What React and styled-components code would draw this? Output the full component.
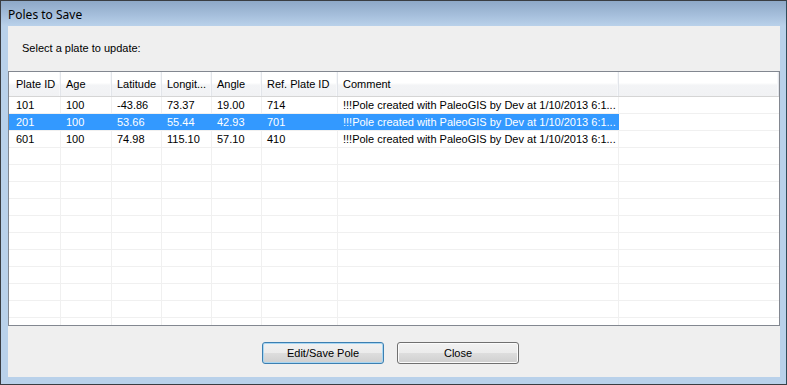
import React from "react"
import styled, { createGlobalStyle } from "styled-components"

const GlobalStyle = createGlobalStyle`
  html, body {
    margin: 0;
    padding: 0;
    background: #ffffff;
  }
  body {
    font-family: "Liberation Sans", Arial, sans-serif;
  }
`

const Window = styled.div`
  width: 787px;
  height: 385px;
  box-sizing: border-box;
  border: 1px solid #3a3d42;
  border-right-color: #2f4c5a;
  display: flex;
  flex-direction: column;
  background: #b9d1ea;
  overflow: hidden;
`

const TitleBar = styled.div`
  height: 25px;
  flex: none;
  display: flex;
  align-items: center;
  padding: 1px 0 0 7px;
  box-sizing: border-box;
  background: linear-gradient(to bottom, #8ea8c7 0%, #a5bedb 55%, #b9d1ea 100%);
  font-family: "Noto Sans", "Open Sans", sans-serif;
  font-size: 12px;
  color: #000000;
`

const Client = styled.div`
  flex: 1;
  margin: 0 6px 7px 7px;
  background: #efefef;
  display: flex;
  flex-direction: column;
`

const Prompt = styled.div`
  height: 45px;
  flex: none;
  box-sizing: border-box;
  padding: 16px 0 0 14px;
  font-size: 11px;
  color: #000000;
`

const ListView = styled.div`
  height: 255px;
  flex: none;
  box-sizing: border-box;
  border: 1px solid #828790;
  background: #ffffff;
  display: flex;
  flex-direction: column;
  overflow: hidden;
`

const cols = "52px 51px 50px 50px 50px 76px 281px 1fr"

const HeaderRow = styled.div`
  display: grid;
  grid-template-columns: ${cols};
  height: 25px;
  flex: none;
  box-sizing: border-box;
  border-bottom: 1px solid #d5d5d5;
  background: linear-gradient(to bottom, #ffffff 0%, #ffffff 45%, #f3f4f6 55%, #f1f2f4 100%);
`

const HeaderCell = styled.div`
  display: flex;
  align-items: center;
  padding-left: ${p => (p.$first ? 7 : 5)}px;
  font-size: 11px;
  color: #000000;
  white-space: nowrap;
  border-right: 1px solid #e2e5ea;
  box-shadow: inset -1px 0 0 #f7f8fa;
`

const Body = styled.div`
  flex: 1;
  overflow: hidden;
`

const Row = styled.div`
  display: grid;
  grid-template-columns: ${cols};
  height: 17px;
  box-sizing: border-box;
  border-bottom: 1px solid #f0f0f0;
  padding-right: 1px;
  background: #ffffff;
`

const Cell = styled.div`
  display: flex;
  align-items: center;
  padding-left: ${p => (p.$first ? 7 : 5)}px;
  font-size: 11px;
  white-space: nowrap;
  overflow: hidden;
  color: ${p => (p.$selected ? "#ffffff" : "#000000")};
  background: ${p => (p.$selected ? "#3399ff" : "transparent")};
  border-right: 1px solid ${p => (p.$selected ? "#3399ff" : "#f0f0f0")};
  ${p => p.$filler && "border-right: none;"}
`

const ButtonBar = styled.div`
  flex: 1;
  display: flex;
  justify-content: center;
  align-items: flex-start;
  gap: 13px;
  padding: 16px 7px 0 0;
`

const Button = styled.button`
  width: 122px;
  height: 22px;
  box-sizing: border-box;
  border: 1px solid ${p => (p.$default ? "#3c7fb1" : "#707070")};
  border-radius: 3px;
  background: linear-gradient(to bottom, #f2f2f2 0%, #ebebeb 50%, #dddddd 51%, #cfcfcf 100%);
  box-shadow: inset 0 0 0 1px ${p => (p.$default ? "#a8d6f2" : "#fbfbfb")};
  font-family: "Liberation Sans", Arial, sans-serif;
  font-size: 11px;
  color: #000000;
  padding: 0;
`

const headers = ["Plate ID", "Age", "Latitude", "Longit...", "Angle", "Ref. Plate ID", "Comment", ""]

const comment = "!!!Pole created with PaleoGIS by Dev at 1/10/2013 6:1..."

const poles = [
  ["101", "100", "-43.86", "73.37", "19.00", "714", comment],
  ["201", "100", "53.66", "55.44", "42.93", "701", comment],
  ["601", "100", "74.98", "115.10", "57.10", "410", comment],
]

const emptyRows = 11

const App = () => {
  const selected = 1

  return (
    <>
      <GlobalStyle />
      <Window>
        <TitleBar>Poles to Save</TitleBar>
        <Client>
          <Prompt>Select a plate to update:</Prompt>
          <ListView>
            <HeaderRow>
              {headers.map((h, i) => (
                <HeaderCell key={i} $first={i === 0}>{h}</HeaderCell>
              ))}
            </HeaderRow>
            <Body>
              {poles.map((row, r) => (
                <Row key={r}>
                  {row.map((v, c) => (
                    <Cell key={c} $first={c === 0} $selected={r === selected}>{v}</Cell>
                  ))}
                  <Cell $filler />
                </Row>
              ))}
              {Array.from({ length: emptyRows }).map((_, r) => (
                <Row key={"e" + r}>
                  {headers.map((_, c) => (
                    <Cell key={c} $filler={c === headers.length - 1} />
                  ))}
                </Row>
              ))}
            </Body>
          </ListView>
          <ButtonBar>
            <Button $default>Edit/Save Pole</Button>
            <Button>Close</Button>
          </ButtonBar>
        </Client>
      </Window>
    </>
  )
}

export default App
